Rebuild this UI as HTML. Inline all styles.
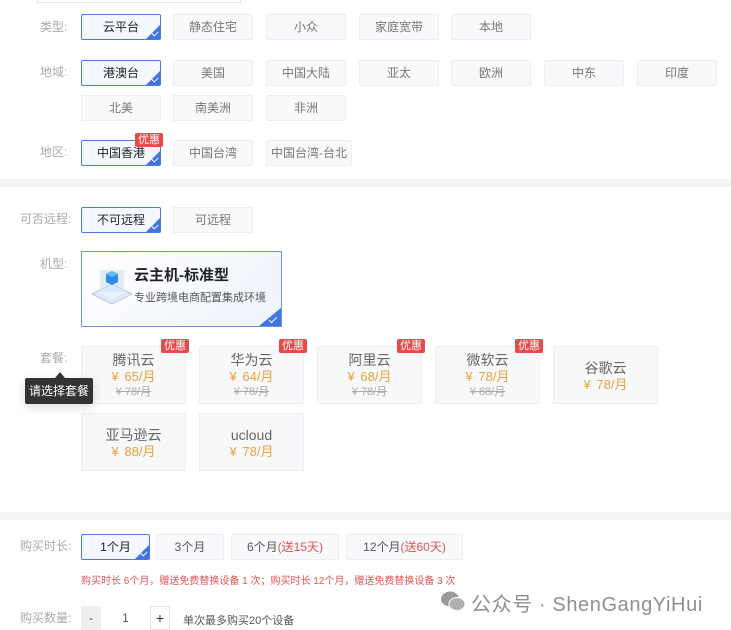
<!DOCTYPE html>
<html><head><meta charset="utf-8"><style>
*{margin:0;padding:0;box-sizing:border-box}
body{width:731px;height:630px;background:#fff;position:relative;overflow:hidden;font-family:"Liberation Sans","Noto Sans CJK SC",sans-serif;font-size:12px;color:#333}
.a{position:absolute}
.band{position:absolute;left:0;width:731px;height:8px;background:#f4f5f5}
.lbl{position:absolute;color:#aaa;font-size:12px}
.b{position:absolute;height:26px;border:1px solid #eceef1;background:#f8f9fb;color:#777;text-align:center;line-height:24px;font-size:12px;border-radius:2px}
.b.s{border:1px solid #4d7ad6;background:#f4f8fe;color:#222}
.b.s::after{content:"";position:absolute;right:0;bottom:0;width:0;height:0;border-left:14px solid transparent;border-bottom:14px solid #3f75e0}
.b.s::before{content:"";position:absolute;right:2px;bottom:4px;width:5px;height:3px;border-left:1px solid #fff;border-bottom:1px solid #fff;transform:rotate(-45deg);z-index:2}
.tag{position:absolute;background:#e8494b;color:#fff;font-size:11px;line-height:14px;padding:0 3px;border-radius:2px;z-index:3}
.c{position:absolute;width:105px;height:58px;border:1px solid #eceef1;background:#f7f8fa;text-align:center;border-radius:2px}
.c .n{font-size:14px;color:#666;line-height:18px}
.c .p{font-size:13px;color:#e8a33c;line-height:16px;word-spacing:2px}
.c .o{font-size:11px;color:#aaa;text-decoration:line-through;line-height:15px}
</style></head><body>
<div class="a" style="left:37px;top:-2px;width:204px;height:5px;border:1px solid #e4e6ea;border-top:none"></div>
<div class="lbl" style="left:40px;top:18px">类型:</div>
<div class="b s" style="left:81px;top:14px;width:80px">云平台</div>
<div class="b" style="left:173px;top:14px;width:80px">静态住宅</div>
<div class="b" style="left:266px;top:14px;width:80px">小众</div>
<div class="b" style="left:359px;top:14px;width:80px">家庭宽带</div>
<div class="b" style="left:451px;top:14px;width:80px">本地</div>

<div class="lbl" style="left:40px;top:63px">地域:</div>
<div class="b s" style="left:81px;top:60px;width:80px">港澳台</div>
<div class="b" style="left:173px;top:60px;width:80px">美国</div>
<div class="b" style="left:266px;top:60px;width:80px">中国大陆</div>
<div class="b" style="left:359px;top:60px;width:80px">亚太</div>
<div class="b" style="left:451px;top:60px;width:80px">欧洲</div>
<div class="b" style="left:544px;top:60px;width:80px">中东</div>
<div class="b" style="left:637px;top:60px;width:80px">印度</div>
<div class="b" style="left:81px;top:95px;width:80px">北美</div>
<div class="b" style="left:173px;top:95px;width:80px">南美洲</div>
<div class="b" style="left:266px;top:95px;width:80px">非洲</div>

<div class="lbl" style="left:40px;top:143px">地区:</div>
<div class="b s" style="left:81px;top:140px;width:80px">中国香港</div>
<div class="tag" style="left:135px;top:133px">优惠</div>
<div class="b" style="left:173px;top:140px;width:80px">中国台湾</div>
<div class="b" style="left:266px;top:140px;width:86px">中国台湾-台北</div>

<div class="band" style="top:179px"></div>

<div class="lbl" style="left:20px;top:210px">可否远程:</div>
<div class="b s" style="left:81px;top:207px;width:80px">不可远程</div>
<div class="b" style="left:173px;top:207px;width:80px">可远程</div>

<div class="lbl" style="left:40px;top:255px">机型:</div>
<div class="a" style="left:81px;top:251px;width:201px;height:76px;border:1px solid #6f93d8;background:linear-gradient(135deg,#fff,#eef3fb)">
 <svg class="a" style="left:6px;top:12px" width="48" height="44" viewBox="0 0 48 44">
  <polygon points="4,30 24,20 44,30 24,40" fill="#dfe8f6" stroke="#b8c8e0"/>
  <polygon points="10,28 24,21 38,28 24,35" fill="#eaf1fb"/>
  <rect x="12" y="6" width="24" height="22" fill="#cfe1f7" opacity=".6"/>
  <polygon points="18,10 24,7 30,10 30,18 24,21 18,18" fill="#2f8be6"/>
  <polygon points="18,10 24,7 30,10 24,13" fill="#6fb6f5"/>
 </svg>
 <div class="a" style="left:52px;top:12px;font-size:15px;font-weight:bold;color:#222">云主机-标准型</div>
 <div class="a" style="left:52px;top:37px;font-size:11px;color:#555">专业跨境电商配置集成环境</div>
 <div class="a" style="right:0;bottom:0;border-left:22px solid transparent;border-bottom:18px solid #3f75e0"></div>
 <div class="a" style="right:4px;bottom:5px;width:8px;height:4px;border-left:1.5px solid #fff;border-bottom:1.5px solid #fff;transform:rotate(-45deg)"></div>
</div>

<div class="lbl" style="left:40px;top:349px">套餐:</div>
<div class="c" style="left:81px;top:346px"><div class="n" style="margin-top:4px">腾讯云</div><div class="p">¥ 65/月</div><div class="o">¥ 78/月</div></div>
<div class="tag" style="left:161px;top:339px">优惠</div>
<div class="c" style="left:199px;top:346px"><div class="n" style="margin-top:4px">华为云</div><div class="p">¥ 64/月</div><div class="o">¥ 78/月</div></div>
<div class="tag" style="left:279px;top:339px">优惠</div>
<div class="c" style="left:317px;top:346px"><div class="n" style="margin-top:4px">阿里云</div><div class="p">¥ 68/月</div><div class="o">¥ 78/月</div></div>
<div class="tag" style="left:397px;top:339px">优惠</div>
<div class="c" style="left:435px;top:346px"><div class="n" style="margin-top:4px">微软云</div><div class="p">¥ 78/月</div><div class="o">¥ 88/月</div></div>
<div class="tag" style="left:515px;top:339px">优惠</div>
<div class="c" style="left:553px;top:346px"><div class="n" style="margin-top:12px">谷歌云</div><div class="p">¥ 78/月</div></div>
<div class="c" style="left:81px;top:413px"><div class="n" style="margin-top:12px">亚马逊云</div><div class="p">¥ 88/月</div></div>
<div class="c" style="left:199px;top:413px"><div class="n" style="margin-top:12px">ucloud</div><div class="p">¥ 78/月</div></div>

<div class="a" style="left:25px;top:378px;width:68px;height:26px;background:#333;color:#fff;font-size:12px;line-height:26px;text-align:center;border-radius:2px;box-shadow:0 3px 10px rgba(0,0,0,.15)">请选择套餐</div>
<div class="a" style="left:55px;top:372px;border-left:5px solid transparent;border-right:5px solid transparent;border-bottom:6px solid #333"></div>

<div class="band" style="top:512px"></div>

<div class="lbl" style="left:20px;top:537px">购买时长:</div>
<div class="b s" style="left:81px;top:534px;width:69px">1个月</div>
<div class="b" style="left:156px;top:534px;width:68px;color:#555">3个月</div>
<div class="b" style="left:231px;top:534px;width:108px;color:#555">6个月<span style="color:#e05454">(送15天)</span></div>
<div class="b" style="left:346px;top:534px;width:117px;color:#555">12个月<span style="color:#e05454">(送60天)</span></div>
<div class="a" style="left:81px;top:572px;font-size:10px;color:#e05454">购买时长 6个月，赠送免费替换设备 1 次；购买时长 12个月，赠送免费替换设备 3 次</div>

<div class="lbl" style="left:20px;top:609px">购买数量:</div>
<div class="a" style="left:81px;top:606px;width:20px;height:24px;background:#eee;text-align:center;line-height:24px;color:#555">-</div>
<div class="a" style="left:101px;top:606px;width:49px;height:24px;text-align:center;line-height:24px;color:#555">1</div>
<div class="a" style="left:150px;top:606px;width:20px;height:24px;border:1px solid #e4e6ea;text-align:center;line-height:22px;color:#333;font-size:14px">+</div>
<div class="a" style="left:183px;top:612px;font-size:11px;color:#555">单次最多购买20个设备</div>

<svg class="a" style="left:440px;top:589px" width="26" height="24" viewBox="0 0 26 24"><ellipse cx="10" cy="10" rx="9" ry="7.5" fill="#9a9a9a"/><ellipse cx="17" cy="15" rx="8" ry="6.5" fill="#b0b0b0" stroke="#fff" stroke-width="1"/></svg>
<div class="a" style="left:471px;top:588px;font-size:20px;color:#8f8f8f;letter-spacing:.6px">公众号 · ShenGangYiHui</div>
</body></html>
